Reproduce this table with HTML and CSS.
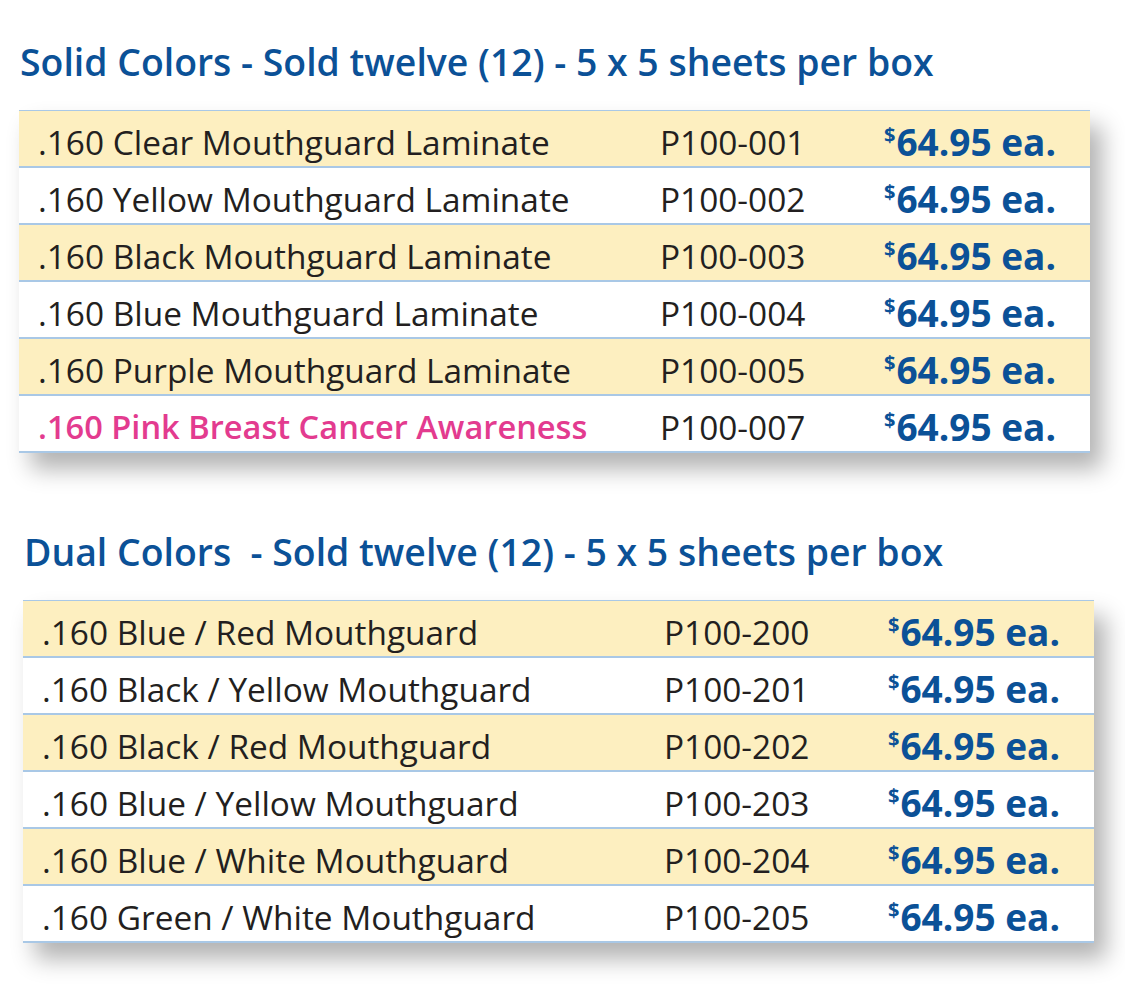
FILE: index.html
```html
<!DOCTYPE html>
<html>
<head>
<meta charset="utf-8">
<link rel="stylesheet" href="styles.css">
</head>
<body>
<div class="page">
  <section class="group group-solid">
    <h2 class="title">Solid Colors - Sold twelve (12) - 5 x 5 sheets per box</h2>
    <div class="table">
      <div class="row alt"><span class="name">.160 Clear Mouthguard Laminate</span><span class="code">P100-001</span><span class="price"><sup>$</sup>64.95 ea.</span></div>
      <div class="row"><span class="name">.160 Yellow Mouthguard Laminate</span><span class="code">P100-002</span><span class="price"><sup>$</sup>64.95 ea.</span></div>
      <div class="row alt"><span class="name">.160 Black Mouthguard Laminate</span><span class="code">P100-003</span><span class="price"><sup>$</sup>64.95 ea.</span></div>
      <div class="row"><span class="name">.160 Blue Mouthguard Laminate</span><span class="code">P100-004</span><span class="price"><sup>$</sup>64.95 ea.</span></div>
      <div class="row alt"><span class="name">.160 Purple Mouthguard Laminate</span><span class="code">P100-005</span><span class="price"><sup>$</sup>64.95 ea.</span></div>
      <div class="row"><span class="name pink">.160 Pink Breast Cancer Awareness</span><span class="code">P100-007</span><span class="price"><sup>$</sup>64.95 ea.</span></div>
    </div>
  </section>
  <section class="group group-dual">
    <h2 class="title">Dual Colors &nbsp;- Sold twelve (12) - 5 x 5 sheets per box</h2>
    <div class="table">
      <div class="row alt"><span class="name">.160 Blue / Red Mouthguard</span><span class="code">P100-200</span><span class="price"><sup>$</sup>64.95 ea.</span></div>
      <div class="row"><span class="name">.160 Black / Yellow Mouthguard</span><span class="code">P100-201</span><span class="price"><sup>$</sup>64.95 ea.</span></div>
      <div class="row alt"><span class="name">.160 Black / Red Mouthguard</span><span class="code">P100-202</span><span class="price"><sup>$</sup>64.95 ea.</span></div>
      <div class="row"><span class="name">.160 Blue / Yellow Mouthguard</span><span class="code">P100-203</span><span class="price"><sup>$</sup>64.95 ea.</span></div>
      <div class="row alt"><span class="name">.160 Blue / White Mouthguard</span><span class="code">P100-204</span><span class="price"><sup>$</sup>64.95 ea.</span></div>
      <div class="row"><span class="name">.160 Green / White Mouthguard</span><span class="code">P100-205</span><span class="price"><sup>$</sup>64.95 ea.</span></div>
    </div>
  </section>
</div>
</body>
</html>
```
FILE: styles.css
```css
* { box-sizing: border-box; }
html, body { margin: 0; padding: 0; background: #ffffff; }
body { font-family: "Open Sans", "Noto Sans", sans-serif; color: #231f20; }
.page { width: 1125px; height: 1000px; overflow: hidden; }
.group-solid { padding: 38px 0 0 19px; }
.group-dual { padding: 75px 0 0 23px; }
.title {
  margin: 0 0 24px 1px;
  font-size: 37.4px;
  font-weight: 600;
  color: #0b5197;
  line-height: 48px;
  white-space: pre;
}
.table {
  width: 1071px;
  border-top: 1px solid #a9c8e6;
  box-shadow: 12px 16px 22px rgba(0, 0, 0, 0.3);
  background: #fff;
}
.row {
  display: grid;
  grid-template-columns: 641px 224px 1fr;
  align-items: center;
  height: 57px;
  padding-top: 5px;
  border-bottom: 2px solid #a9c8e6;
  background: #ffffff;
  font-size: 33.4px;
}
.row.alt { background: #fdefc0; }
.name { padding-left: 19px; white-space: nowrap; }
.name.pink { color: #e33b8f; font-weight: 600; font-size: 32.6px; }
.code { white-space: nowrap; }
.price { color: #0b5197; font-weight: 700; font-size: 37px; white-space: nowrap; }
.price sup { font-size: 20px; vertical-align: 14px; line-height: 0; margin-right: 1px; }
```
